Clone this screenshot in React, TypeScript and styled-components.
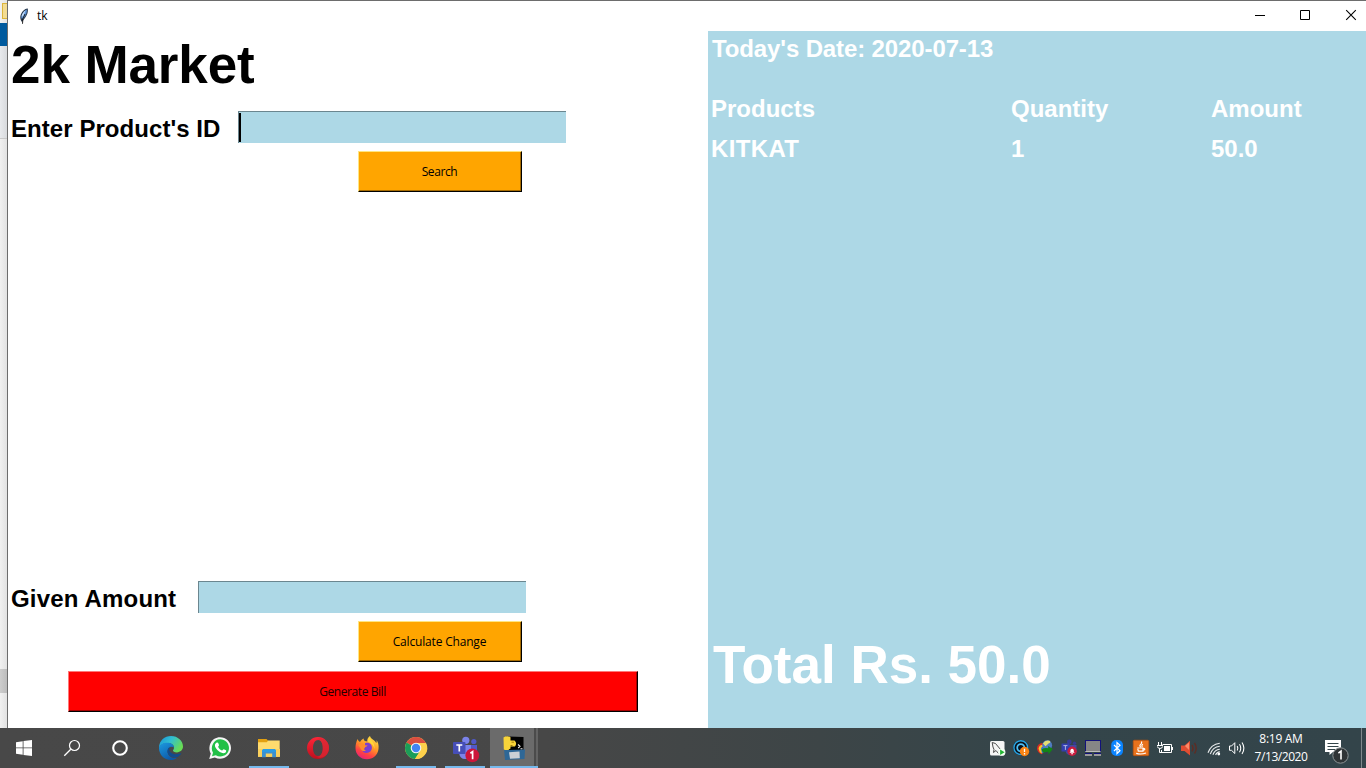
import React from 'react';
import styled, { createGlobalStyle } from 'styled-components';

const Global = createGlobalStyle`
  * { box-sizing: border-box; }
  body { margin: 0; overflow: hidden; background: #fff; }
`;

const Screen = styled.div`
  width: 1366px;
  height: 768px;
  display: flex;
  flex-direction: column;
  font-family: 'Liberation Sans', Arial, sans-serif;
`;

const Desktop = styled.div`
  display: flex;
  height: 728px;
`;

const BackWindow = styled.div`
  width: 7px;
  display: flex;
  flex-direction: column;
  background: linear-gradient(90deg, #f1f1f1, #e2e2e2);
`;

const Strip = styled.div<{ $h: number; $bg?: string }>`
  height: ${p => p.$h}px;
  flex: none;
  background: ${p => p.$bg ?? 'transparent'};
`;

const FolderEdge = styled.div`
  height: 16px;
  margin-left: 2px;
  background: #f3dc92;
  border: 1px solid #dcb53c;
  border-right: 0;
`;

const Window = styled.div`
  width: 1359px;
  display: flex;
  flex-direction: column;
  background: #fff;
  border-top: 1px solid #6d6d6d;
  border-left: 1px solid #6d6d6d;
`;

const TitleBar = styled.div`
  height: 30px;
  flex: none;
  display: flex;
  align-items: center;
  padding-left: 8px;
`;

const WindowTitle = styled.span`
  flex: 1;
  margin-left: 5px;
  font: 12px/16px 'Open Sans', sans-serif;
  color: #000;
`;

const Controls = styled.div`
  display: flex;
`;

const WindowBody = styled.div`
  flex: 1;
  display: flex;
`;

const EntryPanel = styled.div`
  width: 700px;
  display: flex;
  flex-direction: column;
  color: #000;
`;

const Heading = styled.h1`
  margin: 0;
  padding: 4px 0 0 3px;
  height: 80px;
  font-size: 53px;
  font-weight: bold;
  line-height: 60px;
  letter-spacing: -0.1px;
`;

const FieldRow = styled.div`
  display: flex;
  height: 32px;
  padding-left: 3px;
`;

const FieldLabel = styled.label<{ $w: number; $spacing: number }>`
  width: ${p => p.$w}px;
  font-size: 24px;
  font-weight: bold;
  line-height: 35px;
  letter-spacing: ${p => p.$spacing}px;
  white-space: nowrap;
`;

const Entry = styled.div<{ $focused?: boolean }>`
  width: 328px;
  height: 32px;
  background: #add8e6;
  border-top: 1px solid #6b868f;
  border-left: 1px solid #6b868f;
  padding-top: 1px;
  &::before {
    content: '';
    display: ${p => (p.$focused ? 'block' : 'none')};
    width: 2px;
    height: 29px;
    background: #000;
  }
`;

const TkButton = styled.button<{ $w: number; $left: number; $tone: 'orange' | 'red'; $spacing: number }>`
  width: ${p => p.$w}px;
  height: 41px;
  flex: none;
  margin: 0 0 0 ${p => p.$left}px;
  padding: 1px 1px 0 0;
  border: 1px solid;
  border-color: ${p => (p.$tone === 'orange' ? '#ffe680 #000 #000 #ffe680' : '#ff7878 #000 #000 #ff7878')};
  background: ${p => (p.$tone === 'orange' ? '#ffa500' : '#ff0000')};
  box-shadow: inset -1px -1px 0 ${p => (p.$tone === 'orange' ? '#a66b00' : '#a60000')};
  font: 12px/16px 'Open Sans', sans-serif;
  letter-spacing: ${p => p.$spacing}px;
  color: ${p => (p.$tone === 'orange' ? '#000' : '#200')};
`;

const Gap = styled.div<{ $h?: number }>`
  ${p => (p.$h ? `height: ${p.$h}px; flex: none;` : 'flex: 1;')}
`;

const BillPanel = styled.div`
  flex: 1;
  display: flex;
  flex-direction: column;
  background: #add8e6;
  color: #fff;
  font-weight: bold;
  font-size: 24px;
`;

const DateLine = styled.div`
  height: 58px;
  padding-left: 4px;
  line-height: 35px;
  letter-spacing: -0.12px;
`;

const BillRow = styled.div`
  display: grid;
  grid-template-columns: 300px 200px 1fr;
  padding-left: 3px;
  height: 40px;
  line-height: 40px;
`;

const ProductName = styled.span`
  letter-spacing: 0.35px;
`;

const Total = styled.div`
  margin-top: auto;
  padding-left: 5px;
  height: 94px;
  font-size: 53px;
  line-height: 62px;
  white-space: nowrap;
`;

const Taskbar = styled.div`
  height: 40px;
  display: flex;
  background: linear-gradient(90deg, #484848 0%, #474747 40%, #3d4547 60%, #34454a 76%, #33444a 100%);
`;

const Launchers = styled.div`
  display: flex;
  width: 147px;
`;

const Task = styled.div<{ $open?: boolean; $active?: boolean }>`
  width: 49px;
  height: 40px;
  flex: none;
  display: flex;
  background: ${p =>
    p.$active
      ? 'linear-gradient(90deg, #6b6b6b 0 44px, #4b4b4b 44px 46px, #636363 46px 48px, transparent 48px)'
      : 'none'};
  &::after {
    content: '';
    display: ${p => (p.$open || p.$active ? 'block' : 'none')};
    width: ${p => (p.$active ? 48 : 40)}px;
    height: 2px;
    align-self: flex-end;
    margin-left: ${p => (p.$active ? -49 : -45)}px;
    background: #76b9ed;
  }
`;

const TaskSvg = styled.svg`
  flex: none;
`;

const Tray = styled.div`
  margin-left: auto;
  display: flex;
`;

const Clock = styled.div`
  width: 64px;
  padding-top: 2px;
  text-align: center;
  font: 12px/18px 'Open Sans', sans-serif;
  color: #fff;
  white-space: nowrap;
`;

const ClockLine = styled.div<{ $spacing: number }>`
  letter-spacing: ${p => p.$spacing}px;
`;

const PeekLine = styled.div`
  width: 5px;
  border-left: 1px solid #7e898c;
`;

const Launcher = ({ children }: { children: React.ReactNode }) => (
  <svg width="48" height="40" viewBox="0 0 48 40">{children}</svg>
);
const TaskIcon = ({ children }: { children: React.ReactNode }) => (
  <TaskSvg width="49" height="40" viewBox="0 0 49 40">{children}</TaskSvg>
);
const TrayIcon = ({ children }: { children: React.ReactNode }) => (
  <svg width="24" height="40" viewBox="0 0 24 40">{children}</svg>
);

const Feather = () => (
  <svg width="16" height="18" viewBox="0 0 16 18">
    <path d="M6 15C3.2 12 4 6.5 7.5 3.5C9 2 10.7 1.2 11.7 1.5C12.4 4 11.5 8.5 8 12.2Z" fill="#2a3a4e" />
    <path d="M5.4 11.5C5 8.5 6.6 5 10.8 2.4C11.2 5 9.8 8.8 7.4 11.4Z" fill="#5f96dc" />
    <path d="M5.6 9.5C5.9 7 7.6 4.6 9.6 3.3L7.2 9.2Z" fill="#c3dcf8" />
    <path d="M6.5 16.8L6.9 11.5L9 7" stroke="#111" strokeWidth=".9" fill="none" />
  </svg>
);

const EdgeIcon = () => (
  <TaskIcon>
    <defs>
      <linearGradient id="edgeTop" x1="0" y1="0" x2="1" y2=".5">
        <stop offset="0" stopColor="#1792dc" /><stop offset=".5" stopColor="#32bfd0" /><stop offset="1" stopColor="#68dc55" />
      </linearGradient>
      <linearGradient id="edgeLow" x1="0" y1="0" x2=".6" y2="1">
        <stop offset="0" stopColor="#1c9ae0" /><stop offset="1" stopColor="#0d58a8" />
      </linearGradient>
    </defs>
    <path d="M12 19C12.5 12.5 17.5 8 24 8C31 8 36 13 36 18.6C36 22 33.3 24.4 29.8 24.4C27.4 24.4 26 23.5 26 22.5C26 21.7 27 21.4 27 19.7C27 17 24.3 15 20.6 15C16.5 15 13.2 17 12 20Z" fill="url(#edgeTop)" />
    <path d="M12 20C12.5 16.8 16 14.8 20.4 14.8C24 14.8 26.8 16.6 27 19.5C24.5 17.8 20.8 19.5 20.6 23.2C20.4 27.7 25 31 29.8 29.9C28 31.3 26 32 24 32C17 32 12 26.5 12 20Z" fill="url(#edgeLow)" />
    <path d="M23.7 18.5C21.6 19.3 20.4 21 20.4 23.3C20.4 27.3 25.5 30.5 30 29.3C32 28.3 33.5 26.9 34.5 25.2C33.8 25 31.5 26.2 28.8 26.2C24.8 26.2 22.2 23.5 22.3 21.2C22.3 20 22.8 19.1 23.7 18.5Z" fill="#124b8d" />
  </TaskIcon>
);

const WhatsAppIcon = () => (
  <TaskIcon>
    <path d="M13.2 31L14.8 25.5C11 18.5 15.5 9.2 24 9.2C30 9.2 35 13.9 35 19.9C35 28.2 26 33.2 18.8 29.4Z" fill="#f5f5f5" />
    <path d="M16 28.2L17 24.8C13.8 19 17.6 11.2 24.2 11.2C29 11.2 33 15 33 19.9C33 26.6 25.6 30.5 19.8 27.2Z" fill="#22c047" />
    <path d="M20.8 14.6C21.4 14.3 22 14.6 22.2 15.1L23 17C23.2 17.6 22 18.5 22.2 18.9C23 20.6 24.4 21.8 26 22.4C26.6 22.6 27.2 21 27.8 21.2L30 22.3C30.5 22.6 30 24.2 29.2 24.8C26.5 26.6 20.2 22.4 19 18.3C18.7 16.7 19.4 15.3 20.8 14.6Z" fill="#fff" />
  </TaskIcon>
);

const FolderIcon = () => (
  <TaskIcon>
    <path d="M13 11h8.5l2 2H34v3H13z" fill="#e3a010" />
    <path d="M13 14.2h8.8l1.4-1.7H34.7v16.2H13z" fill="#ffdb6e" />
    <path d="M13 21h22v7.8H13z" fill="#fbd05c" />
    <path d="M17 29.2v-6.5l1.7-1.6h10.6l1.7 1.6v6.5h-3.8v-3.6h-6.4v3.6z" fill="#3d91cf" />
    <path d="M18 21h12l1 1.5v1.5H17v-1.5z" fill="#2b9ce5" />
  </TaskIcon>
);

const OperaIcon = () => (
  <TaskIcon>
    <defs>
      <linearGradient id="opera" x1="0" y1="0" x2="0" y2="1">
        <stop offset="0" stopColor="#ff2638" /><stop offset="1" stopColor="#bd101e" />
      </linearGradient>
    </defs>
    <path fillRule="evenodd" d="M24 9A11 11 0 1 0 24 31A11 11 0 1 0 24 9ZM24.2 12C27 12 28.8 15.5 28.8 20C28.8 24.5 27 28 24.2 28C21 28 19 24.5 19 20C19 15.5 21 12 24.2 12Z" fill="url(#opera)" />
    <path d="M22 11.5C28 7.8 35 13 35 20C35 27 28 32.2 22 28.5C26.5 29.5 28.8 25 28.8 20C28.8 15 26.5 10.5 22 11.5Z" fill="#d92a35" opacity=".7" />
  </TaskIcon>
);

const FirefoxIcon = () => (
  <TaskIcon>
    <defs>
      <linearGradient id="fox" x1=".8" y1="0" x2=".3" y2="1">
        <stop offset="0" stopColor="#ffe84a" /><stop offset=".45" stopColor="#ff9627" /><stop offset=".75" stopColor="#ff4142" /><stop offset="1" stopColor="#e82178" />
      </linearGradient>
    </defs>
    <path d="M14.5 11C15 11.8 15.4 13.3 17 14C18 12 19.5 11 20.8 10.5C20.5 11.5 21 12.5 22 13L24.2 13.5C24 11 25.3 9 27 8C27.5 11 32 12 33.2 15C33.8 14.4 33.8 13 33.5 12C35 14 36 17 35.5 21C34.8 27.2 29.8 31.3 24 31.3C17.3 31.3 12.4 26.2 12.5 20C12.5 17 13.2 14 14.5 11Z" fill="url(#fox)" />
    <path d="M22 15.2C25.5 13.8 28.9 16 28.9 19.6C28.9 22.8 26.6 25 23.6 25C20.8 25 18.6 23 18.4 20.4L22 20.2Z" fill="#7b3fd0" />
    <path d="M15.2 17C17.5 15.2 20.7 15.6 22 17.3L24.6 17.6C24.2 19 21.8 18.8 21.2 20.3C20.9 21.4 21.6 22.3 23 22.6C20.8 23.8 17.8 22.8 17.3 20Z" fill="#ff8b2d" />
    <path d="M25.5 10C28.5 12 32 15 31.5 21C30.5 17.5 28.8 15.3 25 13.6Z" fill="#ffd83d" />
  </TaskIcon>
);

const ChromeIcon = () => (
  <TaskIcon>
    <circle cx="24" cy="20" r="11" fill="#fdd04b" />
    <path d="M24 20L14.5 14.5A11 11 0 0 1 33.5 14.5L34 15H24Z" fill="#da4e40" />
    <path d="M24 20L14.5 14.5A11 11 0 0 0 23 31L28.5 22.5Z" fill="#1b9d59" />
    <path d="M24 15H34A11 11 0 0 1 23 31L28.5 22.5Z" fill="#fdd04b" />
    <circle cx="24" cy="20" r="5.3" fill="#f4f4f4" />
    <circle cx="24" cy="20" r="4.2" fill="#4285f4" />
  </TaskIcon>
);

const TeamsIcon = () => (
  <TaskIcon>
    <circle cx="24.8" cy="12.3" r="3.6" fill="#7b83eb" />
    <circle cx="32.8" cy="13.5" r="2.6" fill="#5059c9" />
    <path d="M28 17h8v7.5q-1 4-5 4h-3z" fill="#5059c9" />
    <path d="M18 17h12v8q-1 6-6 6t-6-6z" fill="#7b83eb" />
    <rect x="12" y="14" width="12.5" height="12" rx="1" fill="#464eb8" />
    <path d="M15.3 17h6M18.3 17v6.5" stroke="#fff" strokeWidth="1.7" />
    <circle cx="31.3" cy="27.4" r="6.9" fill="#cc163a" />
    <path d="M29.4 25.2L31.6 23.7V31.2" fill="none" stroke="#fff" strokeWidth="1.7" />
  </TaskIcon>
);

const PythonIcon = () => (
  <TaskIcon>
    <path d="M16 8.5L33.5 9V22H16Z" fill="#020202" />
    <path d="M14 21L16 22L35 21.5L34.5 31L15 32Z" fill="#2e6796" />
    <path d="M19 24.2L29.5 23.4L29.8 30.3L20 30.8Z" fill="#cbd0d5" />
    <path d="M13.5 9.5Q17 7 20.5 9.3V12.5H24.5Q27.5 15 25 18.5H20.5V20.5Q17.5 23 13.8 21.5Z" fill="#f8d43a" />
    <path d="M21.5 14.2h2.4M20.5 17.5h2" stroke="#a47c08" strokeWidth="1" />
    <path d="M28 16.5L30 18.3L28.2 20M30.5 20.8h2" stroke="#eee" strokeWidth="1.1" fill="none" />
  </TaskIcon>
);

const TrayIcons = () => (
  <>
    <TrayIcon>
      <rect x="5" y="13" width="14.5" height="14.5" rx="1.5" fill="#f5f5f5" />
      <path d="M7.2 14.5L10.5 15.5L16.5 22.7L14.2 22.5L15 26M7.2 14.5L8 19L9 21.5L8.5 24.5L11 22.5L13.5 25.5" fill="none" stroke="#4c4c4c" strokeWidth="1" />
      <circle cx="16.8" cy="24.2" r="3.6" fill="#f4fff4" />
      <path d="M15.1 21.5L19.6 24.2L15.1 27Z" fill="#22b533" />
    </TrayIcon>
    <TrayIcon>
      <circle cx="11.8" cy="19.7" r="7.6" fill="#08101a" />
      <circle cx="11.8" cy="19.7" r="6.9" fill="none" stroke="#27a3e2" strokeWidth="1.4" />
      <circle cx="11.8" cy="19.7" r="3.6" fill="none" stroke="#4dbff5" strokeWidth="1.8" />
      <circle cx="15.5" cy="23.5" r="4.7" fill="#f88414" />
      <path d="M15.5 20.7v3.4M15.5 25v1.4" stroke="#fff" strokeWidth="1.3" />
    </TrayIcon>
    <TrayIcon>
      <path d="M4 21Q4 15.5 9.5 15L13 21L9 26.3Q5 25.5 4 21Z" fill="#d92d22" />
      <path d="M5.6 20.8Q6 17 10 16.8L12 22L8.5 25.5Q6 24 5.6 20.8Z" fill="#f7c830" />
      <path d="M8 20.5Q8.5 18.3 11 18.5V24L9 25.5Z" fill="#2e71cf" />
      <circle cx="14.2" cy="17.2" r="4.9" fill="#4f7cc0" />
      <path d="M10 15.5Q12 11.8 16.5 12.8Q18.5 14.5 15.5 15.5L12.5 18.3Z" fill="#e5de72" />
      <path d="M8.5 21.5Q11.5 19.5 15.2 20.3V18L19.8 21L15.4 26.5V23.8L10 24.5Z" fill="#128516" />
    </TrayIcon>
    <TrayIcon>
      <circle cx="12.3" cy="14" r="2.4" fill="#343b94" />
      <circle cx="17.5" cy="15.2" r="1.7" fill="#343b94" />
      <path d="M9 17h10.5v5q-1 5-6 5t-5-5z" fill="#4148a0" />
      <rect x="4.5" y="15.5" width="8" height="8" rx=".6" fill="#343fae" />
      <path d="M6.4 17.6h4M8.4 17.6v4.3" stroke="#aeb3e5" strokeWidth="1" />
      <circle cx="15.1" cy="23.3" r="4.7" fill="#c91e3f" />
      <path d="M12.5 24.7L13.4 23.8V22Q15.1 19.5 16.8 22V23.8L17.7 24.7ZM14.2 25.3h1.8v1h-1.8z" fill="#fff" />
    </TrayIcon>
    <TrayIcon>
      <path d="M4 12h16v12H4z" fill="#12127a" />
      <path d="M5 13h14v10H5z" fill="#868686" />
      <path d="M4.3 23.5H19.5" stroke="#bdbdbd" />
      <path d="M4 25h7v3H4zM13 25h7v3h-7z" fill="#999" />
      <path d="M4 25.5h7M13 25.5h7" stroke="#12127a" />
    </TrayIcon>
    <TrayIcon>
      <rect x="6.2" y="12" width="11.8" height="16" rx="5" fill="#0a84ff" />
      <path d="M9 17L15 22.7L12 25.5V14.5L15 17.2L9 23" fill="none" stroke="#fff" strokeWidth="1.2" />
    </TrayIcon>
    <TrayIcon>
      <rect x="4.2" y="12.2" width="15.6" height="15.5" rx="1.2" fill="#e8721c" stroke="#b9500c" strokeWidth=".7" />
      <path d="M12.5 13.5Q13.2 15.3 11.7 16.4T11.6 19M14 16.3Q12.2 17.2 13.3 19M8.2 20H14V23.2H9.3L8.8 20.8M14 20.5Q16.3 20.3 15.7 21.5L14 22.5M7.2 25.4Q12 26.8 17 25" stroke="#fff" fill="none" strokeWidth="1.2" />
    </TrayIcon>
    <TrayIcon>
      <path d="M9.5 16.5H18.5V24.5H8.5V22" fill="none" stroke="#fff" />
      <path d="M11 18h6v5h-6z" fill="#fff" />
      <path d="M19.5 19v3M5.5 14v3M8.5 14v3M4 17.5h6M4.5 18.5Q4.7 20.5 7 20.5T9.5 18.5M6.5 20.5V24.5H9" fill="none" stroke="#fff" strokeWidth="1" />
    </TrayIcon>
    <TrayIcon>
      <path d="M4 17.5H7.5L13 12.7V27.5L7.5 23H4Z" fill="#df4d32" />
      <path d="M8 18L12 14.5V22Z" fill="#f98a69" />
      <path d="M15 17Q17 20.2 15 23.5M17.5 15Q21 20.2 17.5 25.5" fill="none" stroke="#5d2d24" strokeWidth="1.4" />
    </TrayIcon>
    <TrayIcon>
      <path d="M7 24.8A14.3 14.3 0 0 1 18.8 15.2M9.3 26.2A11.3 11.3 0 0 1 18.8 18.2M11.9 26.8A8.3 8.3 0 0 1 18.8 21.2M14.6 27A5 5 0 0 1 18.8 23.8" fill="none" stroke="#e8ebec" strokeWidth="1.1" />
      <circle cx="17.8" cy="26" r="1.4" fill="#fff" />
    </TrayIcon>
    <TrayIcon>
      <path d="M4.5 18H6.5L9.8 14.7V25.5L6.5 22.3H4.5Z" fill="none" stroke="#fff" />
      <path d="M12.2 18Q13.6 20.2 12.2 22.5M14.5 16.2Q17 20.2 14.5 24.3M17 14.5Q20.8 20.2 17 26" fill="none" stroke="#fff" strokeWidth="1.1" />
    </TrayIcon>
  </>
);

const ActionCenter = () => (
  <svg width="48" height="40" viewBox="0 0 48 40">
    <path d="M12 12H28V24H20L16.5 27V24H12Z" fill="#fff" />
    <path d="M14.5 15.5H25.5M14.5 18.5H25.5M14.5 21.5H22" stroke="#34454a" />
    <circle cx="27.5" cy="27.5" r="7.7" fill="#2f3436" stroke="#8d9496" />
    <path d="M25.4 25.2L28 23.2V31.5" fill="none" stroke="#fff" strokeWidth="1.6" />
  </svg>
);

export default function App() {
  return (
    <Screen>
      <Global />
      <Desktop>
        <BackWindow>
          <Strip $h={3} />
          <FolderEdge />
          <Strip $h={4} />
          <Strip $h={23} $bg="#005a9e" />
          <Strip $h={92} $bg="linear-gradient(90deg, #e8eaed, #d8dadd)" />
          <Strip $h={1} $bg="#c9c9c9" />
          <Strip $h={530} />
          <Strip $h={24} $bg="linear-gradient(90deg, #cdcdcd, #bcbcbc)" />
        </BackWindow>
        <Window>
          <TitleBar>
            <Feather />
            <WindowTitle>tk</WindowTitle>
            <Controls>
              <svg width="138" height="30" viewBox="1228 1 138 30" fill="none" stroke="#000">
                <path d="M1255 15.5H1265M1300.5 10.5h9v9h-9z" />
                <path d="M1346.2 10.2L1355.8 19.8M1355.8 10.2L1346.2 19.8" strokeWidth="1.1" />
              </svg>
            </Controls>
          </TitleBar>
          <WindowBody>
            <EntryPanel>
              <Heading>2k Market</Heading>
              <FieldRow>
                <FieldLabel $w={227} $spacing={0.06}>Enter Product's ID</FieldLabel>
                <Entry $focused />
              </FieldRow>
              <Gap $h={8} />
              <TkButton $w={164} $left={350} $tone="orange" $spacing={-0.4}>Search</TkButton>
              <Gap />
              <FieldRow>
                <FieldLabel $w={187} $spacing={0.18}>Given Amount</FieldLabel>
                <Entry />
              </FieldRow>
              <Gap $h={8} />
              <TkButton $w={164} $left={350} $tone="orange" $spacing={-0.18}>Calculate Change</TkButton>
              <Gap $h={9} />
              <TkButton $w={570} $left={60} $tone="red" $spacing={-0.42}>Generate Bill</TkButton>
              <Gap $h={16} />
            </EntryPanel>
            <BillPanel>
              <DateLine>Today's Date: 2020-07-13</DateLine>
              <BillRow><span>Products</span><span>Quantity</span><span>Amount</span></BillRow>
              <BillRow><ProductName>KITKAT</ProductName><span>1</span><span>50.0</span></BillRow>
              <Total>Total Rs. 50.0</Total>
            </BillPanel>
          </WindowBody>
        </Window>
      </Desktop>
      <Taskbar>
        <Launchers>
          <Launcher>
            <path d="M16 14.3L22.7 13.2V19.5H16ZM23.5 13L32 12V19.5H23.5ZM16 20.3H22.7V26.7L16 25.7ZM23.5 20.3H32V28L23.5 26.9Z" fill="#fff" />
          </Launcher>
          <Launcher>
            <circle cx="26.5" cy="17.5" r="5" fill="none" stroke="#fff" strokeWidth="1.2" />
            <path d="M22.8 21.2L16.3 27.7" stroke="#fff" strokeWidth="1.3" />
          </Launcher>
          <Launcher>
            <circle cx="24" cy="20" r="6.8" fill="none" stroke="#fff" strokeWidth="2.1" />
          </Launcher>
        </Launchers>
        <Task><EdgeIcon /></Task>
        <Task><WhatsAppIcon /></Task>
        <Task $open><FolderIcon /></Task>
        <Task><OperaIcon /></Task>
        <Task><FirefoxIcon /></Task>
        <Task $open><ChromeIcon /></Task>
        <Task $open><TeamsIcon /></Task>
        <Task $active><PythonIcon /></Task>
        <Tray>
          <TrayIcons />
          <Clock>
            <ClockLine $spacing={-0.28}>8:19 AM</ClockLine>
            <ClockLine $spacing={-0.45}>7/13/2020</ClockLine>
          </Clock>
          <ActionCenter />
          <PeekLine />
        </Tray>
      </Taskbar>
    </Screen>
  );
}
